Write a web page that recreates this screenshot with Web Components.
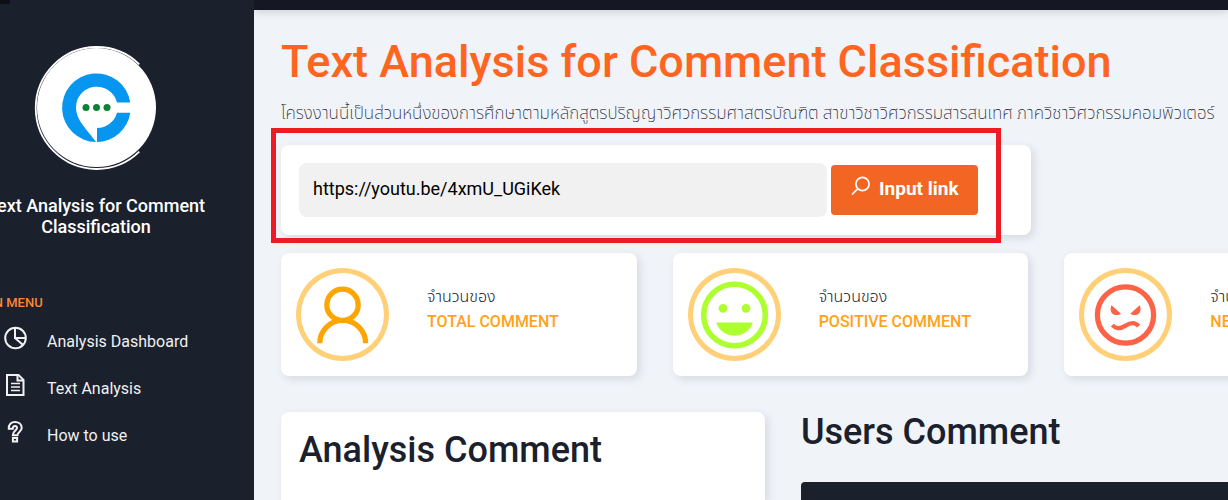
<!DOCTYPE html>
<html lang="en">
<head>
<meta charset="utf-8">
<title>Text Analysis for Comment Classification</title>
<style>
  html, body { margin: 0; height: 100%; }
  body { overflow: hidden; font-family: Roboto, "Noto Sans", "Noto Sans Thai", sans-serif; font-size: 16px; color: #1b202d; background: #f0f3f8; }
</style>
</head>
<body>
<app-shell>
  <side-bar slot="side">
    <menu-item icon="pie">Analysis Dashboard</menu-item>
    <menu-item icon="doc">Text Analysis</menu-item>
    <menu-item icon="help">How to use</menu-item>
  </side-bar>
  <page-intro heading="Text Analysis for Comment Classification">โครงงานนี้เป็นส่วนหนึ่งของการศึกษาตามหลักสูตรปริญญาวิศวกรรมศาสตรบัณฑิต สาขาวิชาวิศวกรรมสารสนเทศ ภาควิชาวิศวกรรมคอมพิวเตอร์</page-intro>
  <link-form></link-form>
  <stat-row>
    <stat-card icon="user" label="จำนวนของ">TOTAL COMMENT</stat-card>
    <stat-card icon="happy" label="จำนวนของ">POSITIVE COMMENT</stat-card>
    <stat-card icon="angry" label="จำนวนของ">NEGATIVE COMMENT</stat-card>
  </stat-row>
  <comment-panels></comment-panels>
</app-shell>

<script>
const ICONS = {
  pie: `<svg width="24" height="24" viewBox="0 0 24 24" fill="none" stroke="currentColor" stroke-width="2"><circle cx="12.500" cy="12" r="10.300"/><path d="M12 1.500V12H22.500M12 12l7.800 6.800"/></svg>`,
  doc: `<svg width="24" height="24" viewBox="0 0 24 24" fill="none" stroke="currentColor" stroke-width="2"><path d="M4 1.900H15.500L20.500 7V22.100H4z"/><path d="M14.500 2v5.500H20.500"/><path d="M8 10.500h9M8 14h9M8 17.500h9" stroke-width="1.500"/></svg>`,
  help: `<svg width="24" height="24" viewBox="0 0 24 24" fill="none" stroke="currentColor" stroke-width="2"><path d="M5.800 8.800C5.500 4.500 8.300 2 12 2s6.700 2.300 6.700 5.800c0 4.200-4.200 4.300-4.200 7.400h-4.700c0-4.700 4.200-4.600 4.200-7.200 0-1.300-.8-2-2-2-1.500 0-2.200 1.100-2.200 2.800z"/><path d="M9.900 17.900h4.200v3.700H9.900z"/></svg>`,
  user: `<svg viewBox="0 0 92 92" fill="none" stroke="#ffa500" stroke-width="5.200"><circle cx="46" cy="36.500" r="15.500"/><path d="M23.500 74.500a22.700 22.700 0 0 1 45.400 0"/></svg>`,
  happy: `<svg viewBox="0 0 92 92"><circle cx="46" cy="46.500" r="30.500" fill="none" stroke="#adff2f" stroke-width="5.500"/><g fill="#adff2f"><circle cx="34.600" cy="40" r="4.300"/><circle cx="57.400" cy="40" r="4.300"/><path d="M28 54h36c-2.500 8-9.500 13-18 13s-15.500-5-18-13z"/></g></svg>`,
  angry: `<svg viewBox="0 0 92 92"><circle cx="46" cy="46.500" r="27.800" fill="none" stroke="#ff6347" stroke-width="5.200"/><path d="M32.200 36.800l9.300 8.400c-2.500 2.300-8.500 1.800-9.800-2-.700-2.200-.500-4.600.5-6.400zM60 36.800l-9.300 8.400c2.500 2.300 8.500 1.800 9.800-2 .700-2.200.500-4.600-.5-6.400z" fill="#ff6347"/><path d="M33 56.500c3.500 3.800 8 3.800 13.200.5 5-3.300 9.300-3.400 12.800.5" fill="none" stroke="#ff6347" stroke-width="4.200"/></svg>`,
  search: `<svg width="20" height="20" viewBox="0 0 20 20" fill="none" stroke="currentColor" stroke-width="1.700"><circle cx="11.500" cy="8" r="6.600"/><path d="M6.900 12.600L1 18.500"/></svg>`,
  logo: `<svg width="124" height="126" viewBox="34 45 124 126" role="img" aria-label="Logo"><circle cx="96.500" cy="107.500" r="59.500" fill="#fff"/><path d="M139.300 64.300A61 61 0 1 0 139.300 151.700" fill="none" stroke="#fff" stroke-width="1.800"/><path d="M130.300 102.500A34.300 34.300 0 1 0 96 142C88 130 76 121 76 107.200a20.800 20.800 0 0 1 41-4.700z M97 142A34.300 34.300 0 0 0 130.300 112.700H117A20.800 20.800 0 0 1 97 128z" fill="#0796ef"/><g fill="#0b8235"><circle cx="86" cy="107.500" r="3.500"/><circle cx="96.500" cy="107.500" r="3.500"/><circle cx="107" cy="107.500" r="3.500"/></g></svg>`
};

function define(name, render) {
  customElements.define(name, class extends HTMLElement {
    constructor() {
      super();
      const t = document.createElement('template');
      t.innerHTML = render(this);
      this.attachShadow({ mode: 'open' }).append(t.content.cloneNode(true));
    }
  });
}

define('app-shell', () => `
  <style>
    :host { display: grid; grid-template-columns: 254px minmax(0, 1fr); min-height: 100vh; }
    aside { background: #1b202d; overflow: hidden; position: relative; }
    aside::before { content: ""; position: absolute; width: 10px; height: 4px; background: #0d1017; }
    .body { overflow: hidden; }
    .bar { height: 10px; background: #151823; box-shadow: 0 2px 8px rgba(0, 0, 0, .15); }
    main { margin-right: -192px; padding: 21px 0 0 27px; }
  </style>
  <aside><slot name="side"></slot></aside>
  <div class="body"><div class="bar"></div><main><slot></slot></main></div>`);

define('side-bar', () => `
  <style>
    :host { display: block; margin-left: -62px; color: #fff; }
    header { display: flex; flex-direction: column; align-items: center; padding-top: 45px; }
    svg { display: block; }
    strong { width: 240px; margin-top: 24px; font-weight: 500; font-size: 18px; line-height: 21px; text-align: center; }
    h2 { margin: 56px 0 0 32px; font-size: 13px; line-height: 20px; font-weight: 500; color: #ff8533; }
    nav { display: flex; flex-direction: column; padding: 5px 0 0 65px; }
  </style>
  <header>${ICONS.logo}<strong>Text Analysis for Comment Classification</strong></header>
  <h2>MAIN MENU</h2>
  <nav><slot></slot></nav>`);

define('menu-item', el => `
  <style>
    :host { display: block; }
    a { display: flex; align-items: center; gap: 20px; height: 47px; color: #f1f1f1; text-decoration: none; font-size: 16px; line-height: 24px; }
    svg { display: block; margin-bottom: 8px; }
  </style>
  <a href="#">${ICONS[el.getAttribute('icon')]}<span><slot></slot></span></a>`);

define('page-intro', el => `
  <style>
    :host { display: block; }
    h1 { margin: 0; font-size: 45px; line-height: 62px; font-weight: 500; color: #ff651f; }
    p { margin: 6px 0 0; font-size: 17px; line-height: 28px; font-weight: 200; white-space: nowrap; }
  </style>
  <h1>${el.getAttribute('heading')}</h1>
  <p><slot></slot></p>`);

define('link-form', () => `
  <style>
    :host { display: block; position: relative; width: 750px; margin-top: 18px; }
    form { display: flex; align-items: center; gap: 4px; height: 90px; padding: 0 53px 0 18px; box-sizing: border-box; background: #fff; border-radius: 8px; box-shadow: 3px 3px 9px rgba(40, 60, 80, .13); }
    input { flex: 1; min-width: 0; height: 54px; box-sizing: border-box; padding: 0 14px 4px; border: 0; border-radius: 8px; background: #f1f1f1; font: 18px Roboto, sans-serif; color: #000; }
    button { display: flex; align-items: center; gap: 8px; width: 147px; height: 50px; padding: 0 0 4px 20px; border: 0; border-radius: 4px; background: #f26522; color: #fff; font: 700 19px Roboto, sans-serif; white-space: nowrap; }
    svg { flex: none; margin-bottom: 5px; }
    .mark { position: absolute; left: -10px; top: -17px; width: 730px; height: 115px; box-sizing: border-box; border: 5px solid #ed1c24; pointer-events: none; }
  </style>
  <form><input type="text" aria-label="Video link" value="https://youtu.be/4xmU_UGiKek"><button type="button">${ICONS.search}<span>Input link</span></button></form>
  <div class="mark"></div>`);

define('stat-row', () => `
  <style>:host { display: grid; grid-template-columns: repeat(3, 1fr); gap: 36px; margin-top: 18px; }</style>
  <slot></slot>`);

define('stat-card', el => `
  <style>
    :host { display: flex; gap: 38px; padding: 15px; background: #fff; border-radius: 8px; box-shadow: 3px 3px 9px rgba(40, 60, 80, .13); }
    .ring { width: 93px; height: 93px; box-sizing: border-box; border-radius: 50%; box-shadow: inset 0 0 0 5px #ffd078; }
    svg { display: block; width: 93px; height: 93px; }
    p { margin: 0; font-size: 16px; line-height: 25px; font-weight: 300; white-space: nowrap; }
    .text { padding-top: 16px; }
    .name { font-weight: 500; color: #ffa316; }
  </style>
  <div class="ring">${ICONS[el.getAttribute('icon')]}</div>
  <div class="text"><p>${el.getAttribute('label')}</p><p class="name"><slot></slot></p></div>`);

define('comment-panels', () => `
  <style>
    :host { display: grid; grid-template-columns: 484fr 619fr; gap: 36px; margin-top: 36px; }
    h2 { margin: 0; font-size: 36px; line-height: 40px; font-weight: 500; }
    .analysis { padding: 18px; background: #fff; border-radius: 8px 8px 0 0; box-shadow: 3px 3px 9px rgba(40, 60, 80, .13); }
    .head { height: 18px; margin-top: 30px; border-radius: 4px 4px 0 0; background: #1b202d; }
  </style>
  <section class="analysis"><h2>Analysis Comment</h2></section>
  <section><h2>Users Comment</h2><div class="head"></div></section>`);
</script>
</body>
</html>
